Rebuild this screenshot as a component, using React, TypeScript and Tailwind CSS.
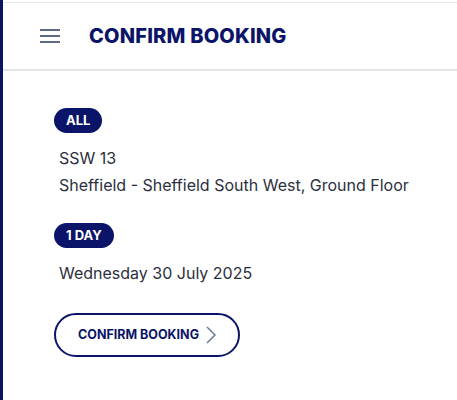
export default function App() {
    return (
        <div
            className="min-h-[400px] w-[457px] bg-white border-l-[3px] border-[#0a1462] pt-[2px]"
            style={{ fontFamily: "Inter, 'Noto Sans', sans-serif" }}
        >
            {/* Header */}
            <div className="border-t border-[#e6e7ea]">
                <div className="h-[68px] flex items-center border-b-2 border-[#e4e5e9]">
                    <button className="ml-[37px] w-[20px] flex flex-col gap-[4px]">
                        <span className="block h-[2px] w-full bg-[#5b6a88]"></span>
                        <span className="block h-[2px] w-full bg-[#5b6a88]"></span>
                        <span className="block h-[2px] w-full bg-[#5b6a88]"></span>
                    </button>
                    <h1 className="ml-[29px] text-[20px] font-extrabold tracking-[0.2px] text-[#0a1468]">
                        CONFIRM BOOKING
                    </h1>
                </div>
            </div>

            {/* Content */}
            <div className="pl-[51px] pt-[36px]">
                <span className="inline-flex items-center h-[25px] px-[12px] rounded-full bg-[#0a1468] text-white text-[13px] font-bold">
                    ALL
                </span>
                <div className="mt-[12px] ml-[5px] text-[16px] leading-[27px] text-[#2b3040]">
                    <p>SSW 13</p>
                    <p>Sheffield - Sheffield South West, Ground Floor</p>
                </div>

                <span className="mt-[24px] inline-flex items-center h-[25px] px-[12px] rounded-full bg-[#0a1468] text-white text-[13px] font-bold">
                    1 DAY
                </span>
                <p className="mt-[12px] ml-[5px] text-[16px] leading-[27px] text-[#2b3040]">
                    Wednesday 30 July 2025
                </p>

                <button className="mt-[26px] flex items-center h-[44px] w-[186px] pl-[22px] rounded-full border-2 border-[#0a1468] text-[#0a1468] text-[12.5px] font-bold">
                    CONFIRM BOOKING
                    <svg className="ml-[6px]" width="12" height="20" viewBox="0 0 12 20" fill="none">
                        <path d="M2 2 L10 10 L2 18" stroke="#6b7a99" strokeWidth="1.5" />
                    </svg>
                </button>
            </div>
        </div>
    )
}
